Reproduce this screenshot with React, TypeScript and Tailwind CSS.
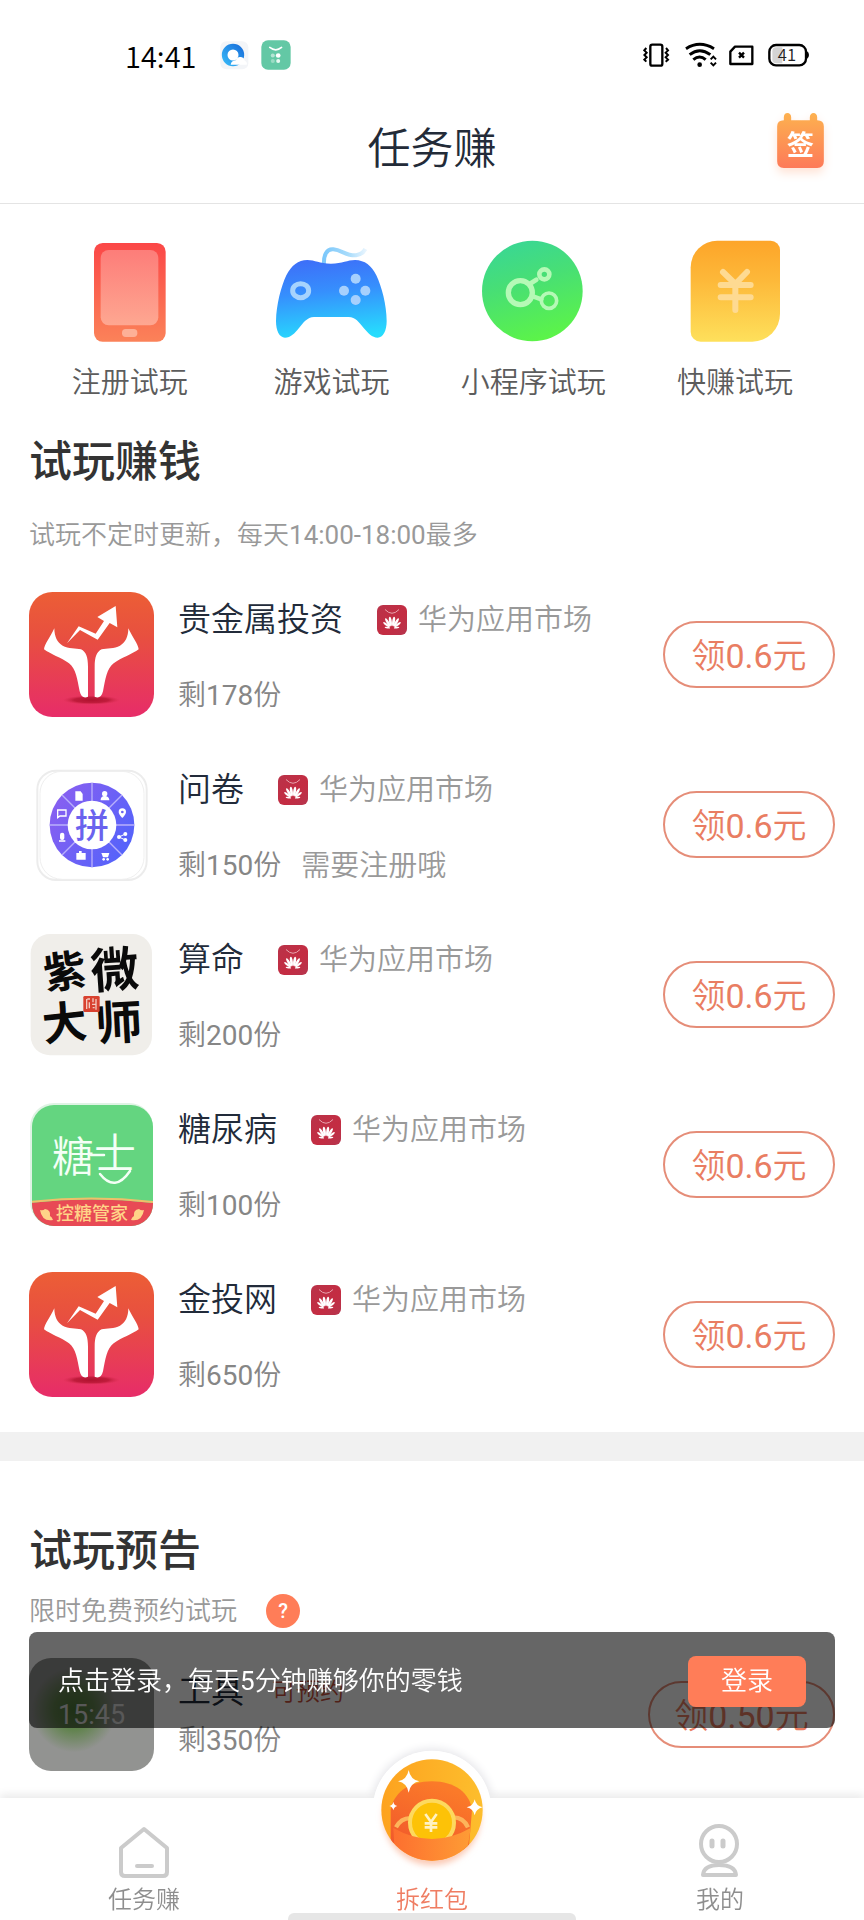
import React from 'react';

type Task = {
  name: string;
  left: number;
  note?: string;
  icon: React.FC;
};

const BullIcon: React.FC = () => (
  <svg viewBox="87 516 375 375" className="size-[125px]" aria-hidden="true">
    <defs>
      <linearGradient id="bull" x1="0" y1="0" x2="0" y2="1">
        <stop offset="0" stopColor="#ec5e36" />
        <stop offset="0.35" stopColor="#e8503f" />
        <stop offset="1" stopColor="#e72c69" />
      </linearGradient>
      <radialGradient id="bullShade">
        <stop offset="0" stopColor="#b0122f" />
        <stop offset="0.6" stopColor="#c01c3c" />
        <stop offset="1" stopColor="#d92c50" stopOpacity="0" />
      </radialGradient>
    </defs>
    <rect x="87" y="516" width="375" height="375" rx="70" fill="url(#bull)" />
    <ellipse cx="274" cy="840" rx="86" ry="14" fill="url(#bullShade)" />
    <g fill="#fff">
      <path d="M163 625C163 650 172 668 188 677C205 686 228 684 243 688C258 695 264 712 264 740V830C253 836 243 831 239 814C232 778 228 746 207 730C184 713 150 702 132 688C133 672 152 650 163 625Z" />
      <path d="M385 625C385 650 376 668 360 677C343 686 320 684 305 688C290 695 284 712 284 740V830C295 836 305 831 309 814C316 778 320 746 341 730C364 713 398 702 416 688C415 672 396 650 385 625Z" />
      <path d="M201 670L236 619L287 641L312 603L292 591L347 558L352 622L329 609L293 659L240 630Z" />
    </g>
  </svg>
);

const SurveyIcon: React.FC = () => (
  <svg viewBox="87 69 375 375" className="size-[125px]" aria-hidden="true">
    <defs>
      <linearGradient id="survey" x1="0" y1="0.2" x2="1" y2="0.8">
        <stop offset="0" stopColor="#8a5ff0" />
        <stop offset="1" stopColor="#5163fb" />
      </linearGradient>
    </defs>
    <rect x="112" y="95" width="328" height="328" rx="56" fill="#fff" stroke="#ececec" strokeWidth="6" />
    <rect x="120" y="97" width="312" height="324" rx="66" fill="none" stroke="#efefef" strokeWidth="3" />
    <circle cx="276" cy="258" r="127" fill="url(#survey)" />
    <g stroke="#b9b0fb" strokeWidth="4">
      <path d="M276 131V385M149 258H403M186 168L366 348M366 168L186 348" />
    </g>
    <circle cx="276" cy="258" r="73" fill="#fff" />
    <text x="276" y="296" textAnchor="middle" fontSize="102" fontWeight="500" fill="#6a62ee">
      拼
    </text>
    <g fill="#fff">
      <path d="M226 157h16l6 8v20h-22zM302 184c0-10 6-13 12-13s14 3 14 13z" />
      <circle cx="314" cy="164" r="8" />
      <path d="M367 208a11 11 0 0 1 11 11c0 8-11 18-11 18s-11-10-11-18a11 11 0 0 1 11-11z" />
      <circle cx="357" cy="294" r="6" />
      <circle cx="376" cy="285" r="6" />
      <circle cx="376" cy="303" r="6" />
      <rect x="180" y="281" width="13" height="22" rx="6" />
      <path d="M177 304h19v4h-19zM229 342h8v-6h8v6h12v20h-28zM304 342h24l-4 13h-15z" />
      <circle cx="311" cy="361" r="4" />
      <circle cx="323" cy="361" r="4" />
    </g>
    <path d="M173 213h25v18h-18l-7 5z" fill="none" stroke="#fff" strokeWidth="4" />
    <path d="M357 294L376 285M357 294L376 303" stroke="#fff" strokeWidth="3" />
    <circle cx="367" cy="219" r="4" fill="#6a62ee" />
  </svg>
);

const FortuneIcon: React.FC = () => (
  <svg viewBox="87 577 375 375" className="size-[125px]" aria-hidden="true">
    <rect x="92" y="583" width="364" height="364" rx="58" fill="#f0eeea" />
    <g fill="#0a0a0a" fontWeight="700" textAnchor="middle">
      <text x="194" y="742" fontSize="128" transform="rotate(-7 194 690)">紫</text>
      <text x="344" y="742" fontSize="144" transform="rotate(-4 344 690)">微</text>
      <text x="194" y="898" fontSize="134" transform="rotate(-6 194 850)">大</text>
      <text x="356" y="900" fontSize="140" transform="rotate(-3 356 850)">师</text>
    </g>
    <rect x="250" y="769" width="49" height="48" rx="4" fill="#d8412f" />
    <path d="M260 778v30M270 778h-8M268 788v18M279 776v12M276 794h14M288 778v32M278 804h6" stroke="#f3c9bf" strokeWidth="4" />
  </svg>
);

const SugarIcon: React.FC = () => (
  <svg viewBox="0 0 125 125" className="size-[125px]" aria-hidden="true">
    <defs>
      <clipPath id="sugarClip">
        <rect x="3" y="3" width="121" height="121" rx="22" />
      </clipPath>
    </defs>
    <rect x="1" y="1" width="123" height="123" rx="24" fill="#dff3e4" />
    <g clipPath="url(#sugarClip)">
      <rect width="125" height="125" fill="#64d580" />
      <path d="M0 101Q62 94 125 101V125H0Z" fill="#e84a55" />
      <path d="M0 100Q62 93 125 100" fill="none" stroke="#efc06a" strokeWidth="2" />
    </g>
    <g fill="#f4fff6" textAnchor="middle">
      <text x="44" y="70" fontSize="42">糖</text>
      <text x="86" y="67" fontSize="42">士</text>
    </g>
    <path d="M71 72Q86 91 101 69M62 53H75" fill="none" stroke="#f4fff6" strokeWidth="2.5" strokeLinecap="round" />
    <text x="63" y="118" textAnchor="middle" fontSize="18" fontWeight="500" fill="#ffd488">
      控糖管家
    </text>
    <g fill="#ffd488">
      <path d="M11 108q3 1 5-1q6 1 5 7q2 1 3 4q-11 2-13-10z" />
      <path d="M115 108q-3 1-5-1q-6 1-5 7q-2 1-3 4q11 2 13-10z" />
    </g>
  </svg>
);

const StoreIcon: React.FC = () => (
  <svg viewBox="0 0 30 30" className="size-[30px] shrink-0" aria-hidden="true">
    <defs>
      <linearGradient id="store" x1="0" y1="0" x2="1" y2="1">
        <stop offset="0" stopColor="#b93349" />
        <stop offset="0.6" stopColor="#c42c42" />
        <stop offset="1" stopColor="#b5354e" />
      </linearGradient>
    </defs>
    <rect width="30" height="30" rx="6" fill="url(#store)" />
    <path d="M8 4.500Q15 12 22 4.500" fill="none" stroke="#e8a3ad" strokeWidth="1" />
    <g fill="#fff">
      <ellipse cx="13.4" cy="16.400" rx="1.4" ry="4.8" transform="rotate(-8 13.4 16.4)" />
      <ellipse cx="16.6" cy="16.400" rx="1.4" ry="4.8" transform="rotate(8 16.6 16.4)" />
      <ellipse cx="10.8" cy="17.400" rx="1.3" ry="4.8" transform="rotate(-30 10.8 17.4)" />
      <ellipse cx="19.2" cy="17.400" rx="1.3" ry="4.8" transform="rotate(30 19.2 17.4)" />
      <ellipse cx="9.4" cy="19.600" rx="1.1" ry="3.9" transform="rotate(-52 9.4 19.6)" />
      <ellipse cx="20.6" cy="19.600" rx="1.1" ry="3.9" transform="rotate(52 20.6 19.6)" />
      <ellipse cx="10.4" cy="22.600" rx="0.8" ry="2.8" transform="rotate(-82 10.4 22.6)" />
      <ellipse cx="19.6" cy="22.600" rx="0.8" ry="2.8" transform="rotate(82 19.6 22.6)" />
    </g>
  </svg>
);

const PhoneIcon: React.FC = () => (
  <svg viewBox="90 60 360 306" className="h-[102px] w-[120px]" aria-hidden="true">
    <defs>
      <linearGradient id="phone" x1="0" y1="0" x2="0" y2="1">
        <stop offset="0" stopColor="#fb4747" />
        <stop offset="1" stopColor="#fb8259" />
      </linearGradient>
      <linearGradient id="screen" x1="0" y1="0" x2="0" y2="1">
        <stop offset="0" stopColor="#fd7d79" />
        <stop offset="1" stopColor="#fea791" />
      </linearGradient>
    </defs>
    <rect x="162" y="69" width="215" height="296" rx="26" fill="url(#phone)" />
    <rect x="182" y="90" width="173" height="226" rx="24" fill="url(#screen)" />
    <rect x="246" y="327" width="46" height="24" rx="11" fill="#fdb097" />
  </svg>
);

const GamepadIcon: React.FC = () => (
  <svg viewBox="696 60 360 306" className="h-[102px] w-[120px]" aria-hidden="true">
    <defs>
      <linearGradient id="pad" x1="0.4" y1="0" x2="0.55" y2="1">
        <stop offset="0" stopColor="#3d70f8" />
        <stop offset="0.4" stopColor="#368ffd" />
        <stop offset="1" stopColor="#27dcfd" />
      </linearGradient>
      <linearGradient id="cord" x1="0" y1="0" x2="1" y2="0">
        <stop offset="0" stopColor="#7cc8fb" />
        <stop offset="0.6" stopColor="#a9dcfb" />
        <stop offset="1" stopColor="#e6f4fe" />
      </linearGradient>
    </defs>
    <path d="M852 135C850 105 860 86 880 88C905 90 920 108 948 106C962 104 971 97 976 87" fill="none" stroke="url(#cord)" strokeWidth="12" />
    <path
      d="M802 120C825 120 838 131 873 131C908 131 922 120 945 120C975 121 994 136 1009 166C1025 200 1040 255 1040 303C1040 333 1029 353 1013 353C996 353 984 339 971 324C956 306 947 292 926 291H822C801 292 791 307 777 324C764 340 752 353 735 353C718 352 708 333 708 303C709 255 723 200 739 166C755 136 774 120 802 120Z"
      fill="url(#pad)"
    />
    <ellipse cx="782" cy="212" rx="24" ry="21" fill="none" stroke="#a6d3fd" strokeWidth="15" />
    <g fill="#a6d0fd">
      <circle cx="947" cy="176" r="15" />
      <circle cx="912" cy="212" r="15" />
      <circle cx="976" cy="212" r="15" />
      <circle cx="947" cy="240" r="15" />
    </g>
  </svg>
);

const MiniAppIcon: React.FC = () => (
  <svg viewBox="101 60 360 306" className="h-[102px] w-[120px]" aria-hidden="true">
    <defs>
      <linearGradient id="mini" x1="0.35" y1="0" x2="0.65" y2="1">
        <stop offset="0" stopColor="#3ad793" />
        <stop offset="0.4" stopColor="#48df74" />
        <stop offset="1" stopColor="#5df546" />
      </linearGradient>
    </defs>
    <circle cx="279" cy="213" r="151" fill="url(#mini)" />
    <g fill="none" stroke="#b5f9b6">
      <circle cx="243" cy="218" r="36" strokeWidth="16" />
      <circle cx="315" cy="163" r="15" strokeWidth="14" />
      <circle cx="329" cy="242" r="23" strokeWidth="11" />
      <path d="M272 191L291 179M281 229L306 238" strokeWidth="14" strokeLinecap="round" />
    </g>
  </svg>
);

const CashIcon: React.FC = () => (
  <svg viewBox="705 60 360 306" className="h-[102px] w-[120px]" aria-hidden="true">
    <defs>
      <linearGradient id="cash" x1="0" y1="0" x2="0" y2="1">
        <stop offset="0" stopColor="#fda529" />
        <stop offset="0.4" stopColor="#fdb93a" />
        <stop offset="1" stopColor="#fee05b" />
      </linearGradient>
    </defs>
    <path d="M832 62H992A28 28 0 0 1 1020 90V282A83 83 0 0 1 937 365H782A30 30 0 0 1 752 335V142A80 80 0 0 1 832 62Z" fill="url(#cash)" />
    <path d="M849 156L886 192L921 156M842 195H932M842 232H932M886 195V270" fill="none" stroke="#feda92" strokeWidth="18" strokeLinecap="round" strokeLinejoin="round" />
  </svg>
);

const RedPacketIcon: React.FC = () => (
  <svg viewBox="1056 360 360 360" className="size-[120px]" aria-hidden="true">
    <defs>
      <linearGradient id="packet" x1="0" y1="0" x2="1" y2="0">
        <stop offset="0" stopColor="#fda21f" />
        <stop offset="1" stopColor="#fdbe2d" />
      </linearGradient>
      <linearGradient id="pocket" x1="0" y1="0" x2="1" y2="0">
        <stop offset="0" stopColor="#fd6f2f" />
        <stop offset="1" stopColor="#fe9c35" />
      </linearGradient>
      <linearGradient id="opening" x1="0" y1="1" x2="0.5" y2="0">
        <stop offset="0" stopColor="#f0562c" />
        <stop offset="1" stopColor="#fb7a29" />
      </linearGradient>
      <clipPath id="packetClip">
        <circle cx="1236" cy="540" r="152" />
      </clipPath>
      <filter id="packetGlow" x="-30%" y="-30%" width="160%" height="160%">
        <feGaussianBlur stdDeviation="9" />
      </filter>
    </defs>
    <circle cx="1236" cy="540" r="178" fill="#fff" />
    <circle cx="1236" cy="560" r="146" fill="#fbc9b4" filter="url(#packetGlow)" />
    <g clipPath="url(#packetClip)">
      <rect x="1080" y="386" width="310" height="310" fill="url(#packet)" />
      <path d="M1112 640V540C1120 490 1165 454 1236 454C1305 454 1350 490 1356 540L1346 660Z" fill="url(#opening)" />
      <path d="M1128 592Q1145 560 1180 565M1344 592Q1330 560 1296 562" fill="none" stroke="#fdb45a" strokeWidth="13" />
      <circle cx="1236" cy="578" r="66" fill="#fdc207" stroke="#fdd95e" strokeWidth="12" />
      <path d="M1120 594Q1236 660 1352 594L1336 700H1126Z" fill="url(#pocket)" />
    </g>
    <path d="M1216 552L1233 576L1250 552M1214 580H1252M1214 592H1252M1233 576V606" fill="none" stroke="#fff2c4" strokeWidth="8" />
    <g fill="#fff">
      <path d="M1166 420Q1171 449 1198 454Q1171 459 1166 488Q1161 459 1134 454Q1161 449 1166 420Z" />
      <path d="M1364 508Q1368 528 1388 532Q1368 536 1364 556Q1360 536 1340 532Q1360 528 1364 508Z" />
      <path d="M1120 515Q1122 526 1132 528Q1122 530 1120 541Q1118 530 1108 528Q1118 526 1120 515Z" />
    </g>
  </svg>
);

const categories = [
  { label: '注册试玩', icon: PhoneIcon },
  { label: '游戏试玩', icon: GamepadIcon },
  { label: '小程序试玩', icon: MiniAppIcon },
  { label: '快赚试玩', icon: CashIcon },
];

const tasks: Task[] = [
  { name: '贵金属投资', left: 178, icon: BullIcon },
  { name: '问卷', left: 150, note: '需要注册哦', icon: SurveyIcon },
  { name: '算命', left: 200, icon: FortuneIcon },
  { name: '糖尿病', left: 100, icon: SugarIcon },
  { name: '金投网', left: 650, icon: BullIcon },
];

// Roboto has no demi-light cut, so digits stay at the regular weight
const Num: React.FC<{ children: React.ReactNode }> = ({ children }) => (
  <span className="font-normal">{children}</span>
);

const StatusBar: React.FC = () => (
  <div className="flex h-[91px] items-center justify-between pt-[18px] pr-[51px] pl-[125px]">
    <div className="flex items-center">
      <span className="font-['Noto_Sans_CJK_SC'] text-[29px] leading-7 text-black">14:41</span>
      <svg viewBox="360 60 90 90" className="ml-[23px] size-[30px]" aria-hidden="true">
        <defs>
          <linearGradient id="browser" x1="0" y1="1" x2="1" y2="0">
            <stop offset="0" stopColor="#35b4f6" />
            <stop offset="1" stopColor="#1a73dc" />
          </linearGradient>
        </defs>
        <rect x="361" y="64" width="84" height="84" rx="18" fill="#f3f5f8" />
        <circle cx="399" cy="105" r="25" fill="#fff" stroke="url(#browser)" strokeWidth="17" />
        <path d="M392 134Q394 122 407 121Q412 109 423 111Q433 113 434 122Q443 126 440 134Z" fill="#fff" />
      </svg>
      <svg viewBox="482 62 89 89" className="ml-[11px] size-[30px]" aria-hidden="true">
        <rect x="483" y="63" width="87" height="87" rx="20" fill="#63c8a5" />
        <path d="M508 84Q526 98 543 84" fill="none" stroke="#fff" strokeWidth="5" strokeLinecap="round" />
        <circle cx="517" cy="108" r="6" fill="#b5e5d4" />
        <circle cx="533" cy="108" r="7" fill="#fff" />
        <circle cx="517" cy="124" r="6" fill="#9adcc4" />
        <circle cx="533" cy="124" r="6" fill="#e8f8f2" />
      </svg>
    </div>
    <svg viewBox="70 60 510 90" className="h-[30px] w-[170px]" fill="none" stroke="#000" strokeWidth="6" aria-hidden="true">
      <rect x="92" y="74" width="36" height="63" rx="6" strokeWidth="7" />
      <path d="M80 84l-6 7 7 7-7 7 7 7-7 7 6 6M139 84l6 7-7 7 7 7-7 7 7 7-7 6" />
      <path d="M199 86Q240 60 283 86M210 104Q240 80 272 104M221 119Q240 103 258 119" strokeWidth="9" />
      <circle cx="240" cy="134" r="7" fill="#000" stroke="none" />
      <path d="M273 118l8-8 8 8M273 128l8 8 8-8" />
      <path d="M346 80H398V132H332V95Z" strokeWidth="7" strokeLinejoin="round" />
      <path d="M358 98l15 15M373 98l-15 15" strokeWidth="7" />
      <path d="M470 82h18v48h-18q-12 0-12-12v-24q0-12 12-12z" fill="#d4d4d4" stroke="none" />
      <rect x="449" y="75" width="110" height="61" rx="20" strokeWidth="7" />
      <path d="M562 94q6 3 6 11t-6 11z" fill="#000" stroke="none" />
      <text x="502" y="124" textAnchor="middle" fontSize="50" fill="#222" stroke="none" className="font-['Noto_Sans_CJK_SC']">
        41
      </text>
    </svg>
  </div>
);

const Header: React.FC = () => (
  <header className="relative flex h-[113px] items-center justify-center border-b border-[#e4e4e4] pt-[3px]">
    <h1 className="text-[43px] leading-[60px] text-[#232b38]">任务赚</h1>
    <button type="button" aria-label="签到" className="absolute top-[22px] right-10">
      <svg viewBox="473 278 140 165" className="h-[55px] w-[47px] overflow-visible drop-shadow-[0_5px_5px_#ffe3d6]" aria-hidden="true">
        <defs>
          <linearGradient id="sign" x1="0" y1="0" x2="0" y2="1">
            <stop offset="0" stopColor="#fdb14f" />
            <stop offset="1" stopColor="#fd7a59" />
          </linearGradient>
        </defs>
        <path
          d="M493 300V290Q494 278 504 278Q514 279 515 290V300H571V290Q572 279 582 278Q592 279 593 290V300Q613 300 613 318V423Q613 443 593 443H493Q473 443 473 423V318Q473 300 493 300Z"
          fill="url(#sign)"
        />
        <text x="543" y="404" textAnchor="middle" fontSize="82" fontWeight="700" fill="#fff">
          签
        </text>
      </svg>
    </button>
  </header>
);

const TaskRow: React.FC<{ task: Task }> = ({ task }) => {
  const Icon = task.icon;
  return (
    <li className="flex items-center">
      <Icon />
      <div className="ml-6 flex flex-1 flex-col gap-9 pt-[7px]">
        <div className="flex items-center">
          <h3 className="mr-[34px] text-[33px] leading-10 text-[#222b3a]">{task.name}</h3>
          <StoreIcon />
          <span className="ml-[11px] text-[29px] leading-10 text-[#999]">华为应用市场</span>
        </div>
        <div className="flex items-center gap-5 text-[28px] leading-10 text-[#868686]">
          <span>
            剩<Num>{task.left}</Num>份
          </span>
          {task.note && <span className="text-[29px] text-[#999]">{task.note}</span>}
        </div>
      </div>
      <button type="button" className="h-[67px] w-[172px] rounded-full border-2 border-[#e58d78] pt-1 text-[34px] text-[#e97d62]">
        领<Num>0.6</Num>元
      </button>
    </li>
  );
};

const TabBar: React.FC = () => (
  <div className="fixed inset-x-0 bottom-0">
    <div className="absolute -top-[47px] left-1/2 size-[118px] -translate-x-1/2 rounded-full bg-white shadow-[0_0_10px_2px_#e4e4e8]" />
    <nav className="relative grid h-[122px] grid-cols-3 bg-white text-2xl leading-6 text-[#8e8e8e] shadow-[0_-4px_8px_#ececec]">
      <a href="#tasks" className="flex flex-col items-center pt-7">
        <svg viewBox="0 0 52 52" className="size-[52px]" fill="none" stroke="#cbcbcb" strokeWidth="4" strokeLinecap="round" strokeLinejoin="round" aria-hidden="true">
          <path d="M26 3L49 22V46Q49 50 45 50H7Q3 50 3 46V22Z" />
          <path d="M19 40H34" />
        </svg>
        <span className="mt-[10px]">任务赚</span>
      </a>
      <a href="#packet" className="-mt-12 flex flex-col items-center text-[#ef7d62]">
        <RedPacketIcon />
        <span className="mt-[18px]">拆红包</span>
      </a>
      <a href="#me" className="flex flex-col items-center pt-[26px]">
        <svg viewBox="0 0 54 54" className="size-[54px]" fill="none" stroke="#cbcbcb" strokeWidth="4" aria-hidden="true">
          <circle cx="26" cy="20" r="18" />
          <path d="M19 17V22M30 17V22" strokeWidth="5" strokeLinecap="round" />
          <path d="M10 51Q11 41 26 41Q42 41 43 51Z" strokeLinejoin="round" />
        </svg>
        <span className="mt-[10px]">我的</span>
      </a>
      <div className="absolute bottom-0 left-1/3 h-[7px] w-1/3 rounded-t-md bg-[#e6e6e6]" />
    </nav>
  </div>
);

export default function App() {
  return (
    <div className="min-h-screen bg-white pb-[122px] font-[Roboto,'Noto_Sans_CJK_SC',sans-serif] font-[350]">
      <StatusBar />
      <Header />

      <main>
        <nav className="grid grid-cols-4 pt-9 pr-7 pl-[29px]">
          {categories.map(({ label, icon: Icon }) => (
            <a key={label} href="#tasks" className="flex flex-col items-center gap-[21px]">
              <Icon />
              <span className="text-[29px] leading-10 text-[#5c5c5c]">{label}</span>
            </a>
          ))}
        </nav>

        <section id="tasks" className="px-[29px] pt-[29px] pb-[35px]">
          <h2 className="text-[43px] leading-[60px] font-medium text-[#333]">试玩赚钱</h2>
          <p className="mt-[25px] text-[26px] leading-9 text-[#999]">
            试玩不定时更新，每天<Num>14:00-18:00</Num>最多
          </p>
          <ul className="mt-[39px] flex flex-col gap-[45px]">
            {tasks.map((task) => (
              <TaskRow key={task.name} task={task} />
            ))}
          </ul>
        </section>

        <div className="h-[29px] bg-[#f1f1f1]" />

        <section className="px-[29px] pt-[60px]">
          <h2 className="text-[43px] leading-[60px] font-medium text-[#333]">试玩预告</h2>
          <div className="mt-[12px] flex items-center gap-[29px]">
            <p className="text-[26px] leading-9 text-[#999]">限时免费预约试玩</p>
            <button type="button" className="size-[34px] rounded-full bg-[#ff7d58] text-xl leading-none font-medium text-white">
              ?
            </button>
          </div>
          <div className="mt-[29px] flex">
            <div className="flex h-[113px] w-[125px] shrink-0 items-center justify-center rounded-[22px] bg-[radial-gradient(circle_at_36%_46%,#4c7a38_0%,#62834f_20%,#929391_42%)] text-[27px] leading-8 text-[#ddd]">
              <Num>15:45</Num>
            </div>
            <div className="ml-6 flex flex-1 flex-col gap-[9px] pt-[14px]">
              <div className="flex items-center gap-7">
                <h3 className="text-[33px] leading-10 text-[#222b3a]">工具</h3>
                <span className="text-2xl text-[#c9513c]">可预约</span>
              </div>
              <span className="text-[28px] leading-10 text-[#868686]">
                剩<Num>350</Num>份
              </span>
            </div>
            <button type="button" className="mt-[23px] h-[67px] w-[187px] rounded-full border-2 border-[#e58d78] pt-1 text-[34px] text-[#e97d62]">
              领<Num>0.50</Num>元
            </button>
          </div>
        </section>
      </main>

      <div className="fixed inset-x-[29px] bottom-48 flex h-24 items-center justify-between rounded-lg bg-black/60 px-[29px] pt-0.5 text-[26px] text-white">
        <p>
          点击登录，每天<Num>5</Num>分钟赚够你的零钱
        </p>
        <button type="button" className="h-[51px] w-[118px] rounded-lg bg-[#ff7d58]">
          登录
        </button>
      </div>

      <TabBar />
    </div>
  );
}
